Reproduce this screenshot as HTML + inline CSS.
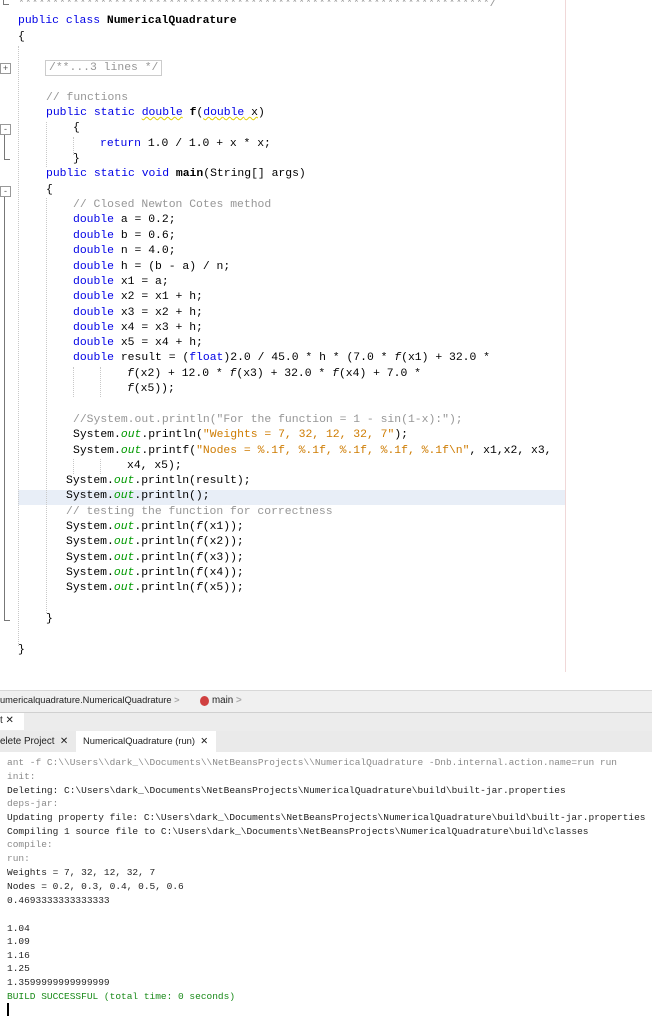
<!DOCTYPE html>
<html><head><style>
body{margin:0;width:652px;height:1024px;background:#fff;position:relative;overflow:hidden;font-family:"Liberation Mono",monospace}
.c{position:absolute;font-size:11.4px;white-space:pre;line-height:15px;color:#000}
.k{color:#0000e6}.cm{color:#969696}.s{color:#ce7b00}.o{color:#009900;font-style:italic}.b{font-weight:bold}
.u{text-decoration:underline wavy #e0d000;text-decoration-thickness:1px}
.o2{position:absolute;font-size:9.5px;white-space:pre;line-height:13px;color:#222;left:7px}
.g{color:#8a8a8a}.gr{color:#1a8a1a}
.ui{position:absolute;font-family:"Liberation Sans",sans-serif;font-size:9.8px;white-space:pre;color:#222}
.ar{color:#aaa;font-weight:bold}
.vg{position:absolute;border-left:1px dotted #c8c8c8}
</style></head><body>
<div style="position:absolute;left:565px;top:0;width:1px;height:672px;background:#f0d8d8"></div>
<div style="position:absolute;left:18px;top:490px;width:547px;height:15px;background:#e8eef7"></div>
<div class="vg" style="left:18px;top:46px;height:600px"></div>
<div class="vg" style="left:46px;top:122px;height:45px"></div>
<div class="vg" style="left:46px;top:198px;height:415px"></div>
<div class="vg" style="left:73px;top:137px;height:18px"></div>
<div class="vg" style="left:73px;top:367px;height:30px"></div><div class="vg" style="left:100px;top:367px;height:30px"></div>
<div class="vg" style="left:73px;top:459px;height:15px"></div><div class="vg" style="left:100px;top:459px;height:15px"></div>
<div style="position:absolute;left:3px;top:0;width:1px;height:4px;background:#777"></div><div style="position:absolute;left:3px;top:4px;width:6px;height:1px;background:#777"></div>
<div style="position:absolute;left:0;top:63px;width:9px;height:9px;border:1px solid #999;font:9px/9px sans-serif;text-align:center;color:#555">+</div>
<div style="position:absolute;left:0;top:124px;width:9px;height:9px;border:1px solid #999;font:9px/8px sans-serif;text-align:center;color:#555">-</div>
<div style="position:absolute;left:4px;top:135px;width:1px;height:24px;background:#777"></div><div style="position:absolute;left:4px;top:159px;width:6px;height:1px;background:#777"></div>
<div style="position:absolute;left:0;top:186px;width:9px;height:9px;border:1px solid #999;font:9px/8px sans-serif;text-align:center;color:#555">-</div>
<div style="position:absolute;left:4px;top:197px;width:1px;height:423px;background:#777"></div><div style="position:absolute;left:4px;top:620px;width:6px;height:1px;background:#777"></div>
<div class="c cm" style="left:18px;top:-3px">*********************************************************************/</div>
<div class="c" style="left:18px;top:14px"><span class="k">public class</span> <span class="b">NumericalQuadrature</span></div>
<div class="c" style="left:18px;top:30px">{</div>
<div class="c cm" style="left:45px;top:60px;border:1px solid #ccc;padding:0 3px;line-height:14px">/**...3 lines */</div>
<div class="c cm" style="left:46px;top:91px">// functions</div>
<div class="c" style="left:46px;top:106px"><span class="k">public static <span class="u">double</span></span> <span class="b">f</span>(<span class="u"><span class="k">double</span> x</span>)</div>
<div class="c" style="left:73px;top:121px">{</div>
<div class="c" style="left:100px;top:137px"><span class="k">return</span> 1.0 / 1.0 + x * x;</div>
<div class="c" style="left:73px;top:152px">}</div>
<div class="c" style="left:46px;top:167px"><span class="k">public static void</span> <span class="b">main</span>(String[] args)</div>
<div class="c" style="left:46px;top:183px">{</div>
<div class="c cm" style="left:73px;top:198px">// Closed Newton Cotes method</div>
<div class="c" style="left:73px;top:213px"><span class="k">double</span> a = 0.2;</div>
<div class="c" style="left:73px;top:229px"><span class="k">double</span> b = 0.6;</div>
<div class="c" style="left:73px;top:244px"><span class="k">double</span> n = 4.0;</div>
<div class="c" style="left:73px;top:260px"><span class="k">double</span> h = (b - a) / n;</div>
<div class="c" style="left:73px;top:275px"><span class="k">double</span> x1 = a;</div>
<div class="c" style="left:73px;top:290px"><span class="k">double</span> x2 = x1 + h;</div>
<div class="c" style="left:73px;top:306px"><span class="k">double</span> x3 = x2 + h;</div>
<div class="c" style="left:73px;top:321px"><span class="k">double</span> x4 = x3 + h;</div>
<div class="c" style="left:73px;top:336px"><span class="k">double</span> x5 = x4 + h;</div>
<div class="c" style="left:73px;top:351px"><span class="k">double</span> result = (<span class="k">float</span>)2.0 / 45.0 * h * (7.0 * <i>f</i>(x1) + 32.0 *</div>
<div class="c" style="left:127px;top:367px"><i>f</i>(x2) + 12.0 * <i>f</i>(x3) + 32.0 * <i>f</i>(x4) + 7.0 *</div>
<div class="c" style="left:127px;top:382px"><i>f</i>(x5));</div>
<div class="c cm" style="left:73px;top:413px">//System.out.println("For the function = 1 - sin(1-x):");</div>
<div class="c" style="left:73px;top:428px">System.<span class="o">out</span>.println(<span class="s">"Weights = 7, 32, 12, 32, 7"</span>);</div>
<div class="c" style="left:73px;top:444px">System.<span class="o">out</span>.printf(<span class="s">"Nodes = %.1f, %.1f, %.1f, %.1f, %.1f\n"</span>, x1,x2, x3,</div>
<div class="c" style="left:127px;top:459px">x4, x5);</div>
<div class="c" style="left:66px;top:474px">System.<span class="o">out</span>.println(result);</div>
<div class="c" style="left:66px;top:489px">System.<span class="o">out</span>.println();</div>
<div class="c cm" style="left:66px;top:505px">// testing the function for correctness</div>
<div class="c" style="left:66px;top:520px">System.<span class="o">out</span>.println(<i>f</i>(x1));</div>
<div class="c" style="left:66px;top:535px">System.<span class="o">out</span>.println(<i>f</i>(x2));</div>
<div class="c" style="left:66px;top:551px">System.<span class="o">out</span>.println(<i>f</i>(x3));</div>
<div class="c" style="left:66px;top:566px">System.<span class="o">out</span>.println(<i>f</i>(x4));</div>
<div class="c" style="left:66px;top:581px">System.<span class="o">out</span>.println(<i>f</i>(x5));</div>
<div class="c" style="left:46px;top:612px">}</div>
<div class="c" style="left:18px;top:643px">}</div>
<div style="position:absolute;left:0;top:690px;width:652px;height:22px;background:#f0f0f0;border-top:1px solid #d8d8d8"></div>
<div class="ui" style="left:0;top:695px;font-size:9.3px">umericalquadrature.NumericalQuadrature<span class="ar"> &gt;</span></div>
<div style="position:absolute;left:200px;top:696px;width:9px;height:10px;border-radius:50%;background:#d04040"></div>
<div class="ui" style="left:212px;top:695px">main <span class="ar">&gt;</span></div>
<div style="position:absolute;left:0;top:712px;width:652px;height:18px;background:#ececec;border-top:1px solid #d0d0d0;border-bottom:1px solid #d0d0d0"></div>
<div style="position:absolute;left:0;top:713px;width:24px;height:17px;background:#fff"></div>
<div class="ui" style="left:0;top:715px">t ✕</div>
<div style="position:absolute;left:0;top:731px;width:652px;height:21px;background:#eaeaea"></div>
<div style="position:absolute;left:76px;top:731px;width:140px;height:22px;background:#fff"></div>
<div class="ui" style="left:0;top:736px">elete Project  ✕</div>
<div class="ui" style="left:83px;top:735px;font-size:9.4px">NumericalQuadrature (run)  ✕</div>
<div class="o2 g" style="top:756px">ant -f C:\\Users\\dark_\\Documents\\NetBeansProjects\\NumericalQuadrature -Dnb.internal.action.name=run run</div>
<div class="o2 g" style="top:770px">init:</div>
<div class="o2" style="top:784px">Deleting: C:\Users\dark_\Documents\NetBeansProjects\NumericalQuadrature\build\built-jar.properties</div>
<div class="o2 g" style="top:797px">deps-jar:</div>
<div class="o2" style="top:811px">Updating property file: C:\Users\dark_\Documents\NetBeansProjects\NumericalQuadrature\build\built-jar.properties</div>
<div class="o2" style="top:825px">Compiling 1 source file to C:\Users\dark_\Documents\NetBeansProjects\NumericalQuadrature\build\classes</div>
<div class="o2 g" style="top:838px">compile:</div>
<div class="o2 g" style="top:852px">run:</div>
<div class="o2" style="top:866px">Weights = 7, 32, 12, 32, 7</div>
<div class="o2" style="top:880px">Nodes = 0.2, 0.3, 0.4, 0.5, 0.6</div>
<div class="o2" style="top:894px">0.4693333333333333</div>
<div class="o2" style="top:922px">1.04</div>
<div class="o2" style="top:935px">1.09</div>
<div class="o2" style="top:949px">1.16</div>
<div class="o2" style="top:962px">1.25</div>
<div class="o2" style="top:976px">1.3599999999999999</div>
<div class="o2 gr" style="top:990px">BUILD SUCCESSFUL (total time: 0 seconds)</div>
<div style="position:absolute;left:7px;top:1003px;width:2px;height:13px;background:#000"></div>
</body></html>
